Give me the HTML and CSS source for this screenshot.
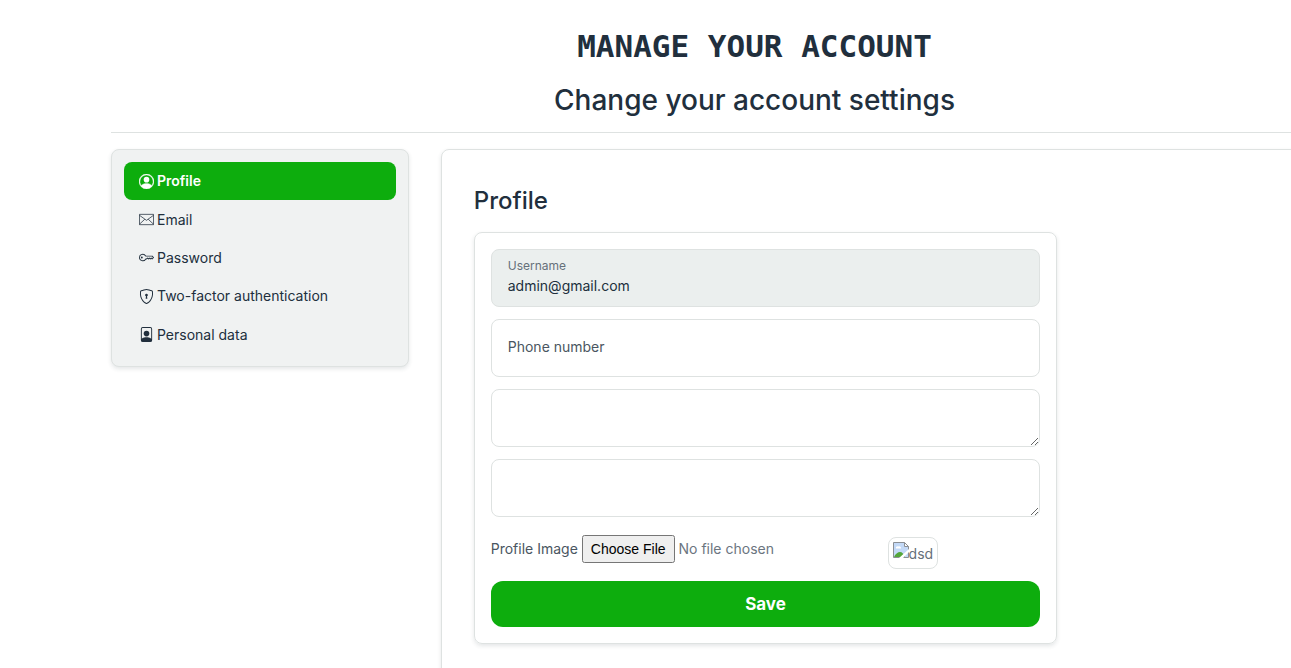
FILE: index.html
```
<!DOCTYPE html>
<html lang="en">
<head>
<meta charset="utf-8">
<title>Manage your account</title>
<link rel="stylesheet" href="styles.css">
</head>
<body>
<main class="page">
  <header class="page-header">
    <h1 class="page-title">MANAGE YOUR ACCOUNT</h1>
    <h2 class="page-subtitle">Change your account settings</h2>
  </header>
  <div class="layout">
    <nav class="sidebar" aria-label="Account settings">
      <a class="nav-link active" href="#profile"><svg class="icon" viewBox="0 0 16 16"><path d="M11 6a3 3 0 1 1-6 0 3 3 0 0 1 6 0z"/><path stroke="currentColor" stroke-width=".4" fill-rule="evenodd" d="M0 8a8 8 0 1 1 16 0A8 8 0 0 1 0 8zm8-7a7 7 0 0 0-5.468 11.370C3.242 11.226 4.805 10 8 10s4.757 1.225 5.468 2.370A7 7 0 0 0 8 1z"/></svg>Profile</a>
      <a class="nav-link" href="#email"><svg class="icon" viewBox="0 0 16 16"><path fill="none" stroke="currentColor" stroke-width=".8" d="M.5 2.500h15v11H.5zM.5 3.500 8 8.900l7.500-5.400M.5 13l5.700-5.300M15.500 13 9.800 7.700"/></svg>Email</a>
      <a class="nav-link" href="#password"><svg class="icon" viewBox="0 0 16 16"><path d="M0 8a4 4 0 0 1 7.465-2H14a.5.5 0 0 1 .354.146l1.500 1.500a.5.5 0 0 1 0 .708l-1.500 1.500a.5.5 0 0 1-.708 0L13 9.207l-.646.647a.5.5 0 0 1-.708 0L11 9.207l-.646.647a.5.5 0 0 1-.708 0L9 9.207l-.646.647A.5.5 0 0 1 8 10h-.535A4 4 0 0 1 0 8zm4-3a3 3 0 1 0 2.712 4.285A.5.5 0 0 1 7.163 9h.63l.853-.854a.5.5 0 0 1 .708 0l.646.647.646-.647a.5.5 0 0 1 .708 0l.646.647.646-.647a.5.5 0 0 1 .708 0l.646.647.793-.793-1-1h-6.630a.5.5 0 0 1-.451-.285A3 3 0 0 0 4 5z"/><path d="M4 8a1 1 0 1 1-2 0 1 1 0 0 1 2 0z"/></svg>Password</a>
      <a class="nav-link" href="#two-factor"><svg class="icon" viewBox="0 0 16 16"><path d="M5.338 1.590a61 61 0 0 0-2.837.856.480.480 0 0 0-.328.390c-.554 4.157.726 7.190 2.253 9.188a10.700 10.700 0 0 0 2.287 2.233c.346.244.652.420.893.533q.180.085.293.118a1 1 0 0 0 .101.025 1 1 0 0 0 .100-.025q.114-.034.294-.118c.240-.113.547-.290.893-.533a10.700 10.700 0 0 0 2.287-2.233c1.527-1.997 2.807-5.031 2.253-9.188a.480.480 0 0 0-.328-.390c-.651-.213-1.750-.560-2.837-.855C9.552 1.290 8.531 1.067 8 1.067c-.530 0-1.552.223-2.662.524zM5.072.560C6.157.265 7.310 0 8 0s1.843.265 2.928.560c1.110.300 2.229.655 2.887.870a1.540 1.540 0 0 1 1.044 1.262c.596 4.477-.787 7.795-2.465 9.990a11.800 11.800 0 0 1-2.517 2.453 7 7 0 0 1-1.048.625c-.280.132-.581.240-.829.240s-.548-.108-.829-.240a7 7 0 0 1-1.048-.625 11.800 11.800 0 0 1-2.517-2.453C1.928 10.487.545 7.169 1.141 2.692A1.540 1.540 0 0 1 2.185 1.430 63 63 0 0 1 5.072.560"/><path d="M9.500 6.500a1.500 1.500 0 0 1-1 1.415l.385 1.990a.5.5 0 0 1-.491.595h-.788a.5.5 0 0 1-.490-.595l.384-1.990a1.500 1.500 0 1 1 2-1.415"/></svg>Two-factor authentication</a>
      <a class="nav-link" href="#personal-data"><svg class="icon" viewBox="0 0 16 16"><path d="M12 1a1 1 0 0 1 1 1v10.755S12 11 8 11s-5 1.755-5 1.755V2a1 1 0 0 1 1-1h8zM4 0a2 2 0 0 0-2 2v12a2 2 0 0 0 2 2h8a2 2 0 0 0 2-2V2a2 2 0 0 0-2-2H4z"/><path d="M8 10a3 3 0 1 0 0-6 3 3 0 0 0 0 6z"/></svg>Personal data</a>
    </nav>
    <section class="panel" id="profile">
      <h3 class="panel-title">Profile</h3>
      <div class="panel-grid">
        <form class="profile-form">
          <div class="field field-disabled">
            <label class="field-label" for="username">Username</label>
            <input class="field-input" id="username" type="text" value="admin@gmail.com" disabled>
          </div>
          <input class="control" type="tel" placeholder="Phone number" aria-label="Phone number">
          <textarea class="control" aria-label="First name"></textarea>
          <textarea class="control" aria-label="Last name"></textarea>
          <div class="file-row">
            <div class="file-field">
              <label for="image">Profile Image</label>
              <input class="file-input" id="image" type="file">
            </div>
            <div class="thumbnail"><svg class="broken" viewBox="0 0 16 16"><path fill="#c3d9f7" stroke="#8b8f94" d="M.5 15.500V.5h11l4 4v11z"/><path fill="#fff" stroke="#8b8f94" d="M11.500.5v4h4z"/><path fill="#fff" d="M3 6.500a1.500 1.500 0 0 1 2-2 2 2 0 0 1 3 2z"/><path fill="#53a63a" d="M1 15c1-3 4-5 6-5s4 2 5 5z"/><path fill="#fff" d="M16 7v3l-6 6H6z"/></svg>dsd</div>
          </div>
          <button class="save" type="submit">Save</button>
        </form>
      </div>
    </section>
  </div>
</main>
</body>
</html>
```
FILE: styles.css
```
* { box-sizing: border-box; }
body {
  margin: 0;
  overflow-x: hidden;
  color: #212f3d;
  background: #fff;
  font: 400 14px/21px Inter, "Liberation Sans", sans-serif;
}
/* The wide layout runs past the right edge of the window. */
.page { margin: 0 -107px 0 111px; padding: 24px 0 0; }
.page-header {
  margin-bottom: 16px;
  padding-bottom: 16px;
  border-bottom: 1px solid #dee2e1;
  text-align: center;
}
.page-title {
  margin: 0 0 16px;
  font: 700 31px/44px "DejaVu Sans Mono", monospace;
}
.page-subtitle { margin: 0; font-size: 28px; line-height: 32px; font-weight: 500; }
.layout, .panel-grid {
  display: grid;
  grid-template-columns: repeat(12, minmax(0, 1fr));
  column-gap: 32px;
  align-items: start;
}
.sidebar {
  grid-column: span 3;
  display: grid;
  grid-auto-rows: 1fr;
  min-height: 218px;
  padding: 12px;
  border: 1px solid #dee2e1;
  border-radius: 8px;
  background: #f0f2f2;
  box-shadow: 0 2px 4px rgba(33, 47, 61, .12);
}
.nav-link {
  display: flex;
  align-items: center;
  gap: 3px;
  padding: 8px 15px;
  border-radius: 8px;
  color: inherit;
  font-size: 14px;
  line-height: 20px;
  text-decoration: none;
}
.nav-link.active { background: #0dad0d; color: #fff; font-weight: 600; }
.icon { width: 15px; height: 15px; fill: currentColor; }
.panel {
  grid-column: span 9;
  padding: 32px;
  border: 1px solid #dee2e1;
  border-radius: 8px;
  box-shadow: 0 2px 4px rgba(33, 47, 61, .12);
}
.panel-title { margin: 0 0 12px; font-size: 24px; line-height: 38px; font-weight: 500; }
.profile-form {
  grid-column: span 8;
  display: flex;
  flex-direction: column;
  gap: 12px;
  padding: 16px;
  border: 1px solid #dee2e1;
  border-radius: 8px;
  box-shadow: 0 2px 4px rgba(33, 47, 61, .12);
}
.field, .control {
  height: 58px;
  padding: 8px 16px;
  border: 1px solid #dee2e1;
  border-radius: 8px;
}
.field-disabled { background: #ebefee; }
.field-label { display: block; color: #66707a; font-size: 12px; line-height: 16px; }
.field-input {
  display: block;
  width: 100%;
  padding: 0;
  border: 0;
  background: none;
  color: #212f3d;
  font: 400 14px/24px Inter, sans-serif;
}
.control {
  display: block;
  width: 100%;
  padding-bottom: 12px;
  background: #fff;
  font: inherit;
  resize: vertical;
}
.control::placeholder { color: #4a5661; opacity: 1; }
.file-row { display: grid; grid-template-columns: 13fr 5fr; align-items: center; }
.file-field { display: flex; align-items: baseline; gap: 4px; color: #4a5661; }
.file-input { font: inherit; color: #6b7580; }
.file-input::file-selector-button { height: 28px; padding: 1px 7px; }
.thumbnail {
  justify-self: start;
  display: flex;
  align-items: center;
  margin-top: 8px;
  padding: 4px;
  height: 32px;
  border: 1px solid #dee2e1;
  border-radius: 8px;
  color: #66707a;
}
.broken { width: 16px; height: 16px; align-self: flex-start; }
.save {
  height: 46px;
  border: 0;
  border-radius: 12px;
  background: #0dad0d;
  color: #fff;
  font: 700 17px/24px Inter, sans-serif;
}
```
